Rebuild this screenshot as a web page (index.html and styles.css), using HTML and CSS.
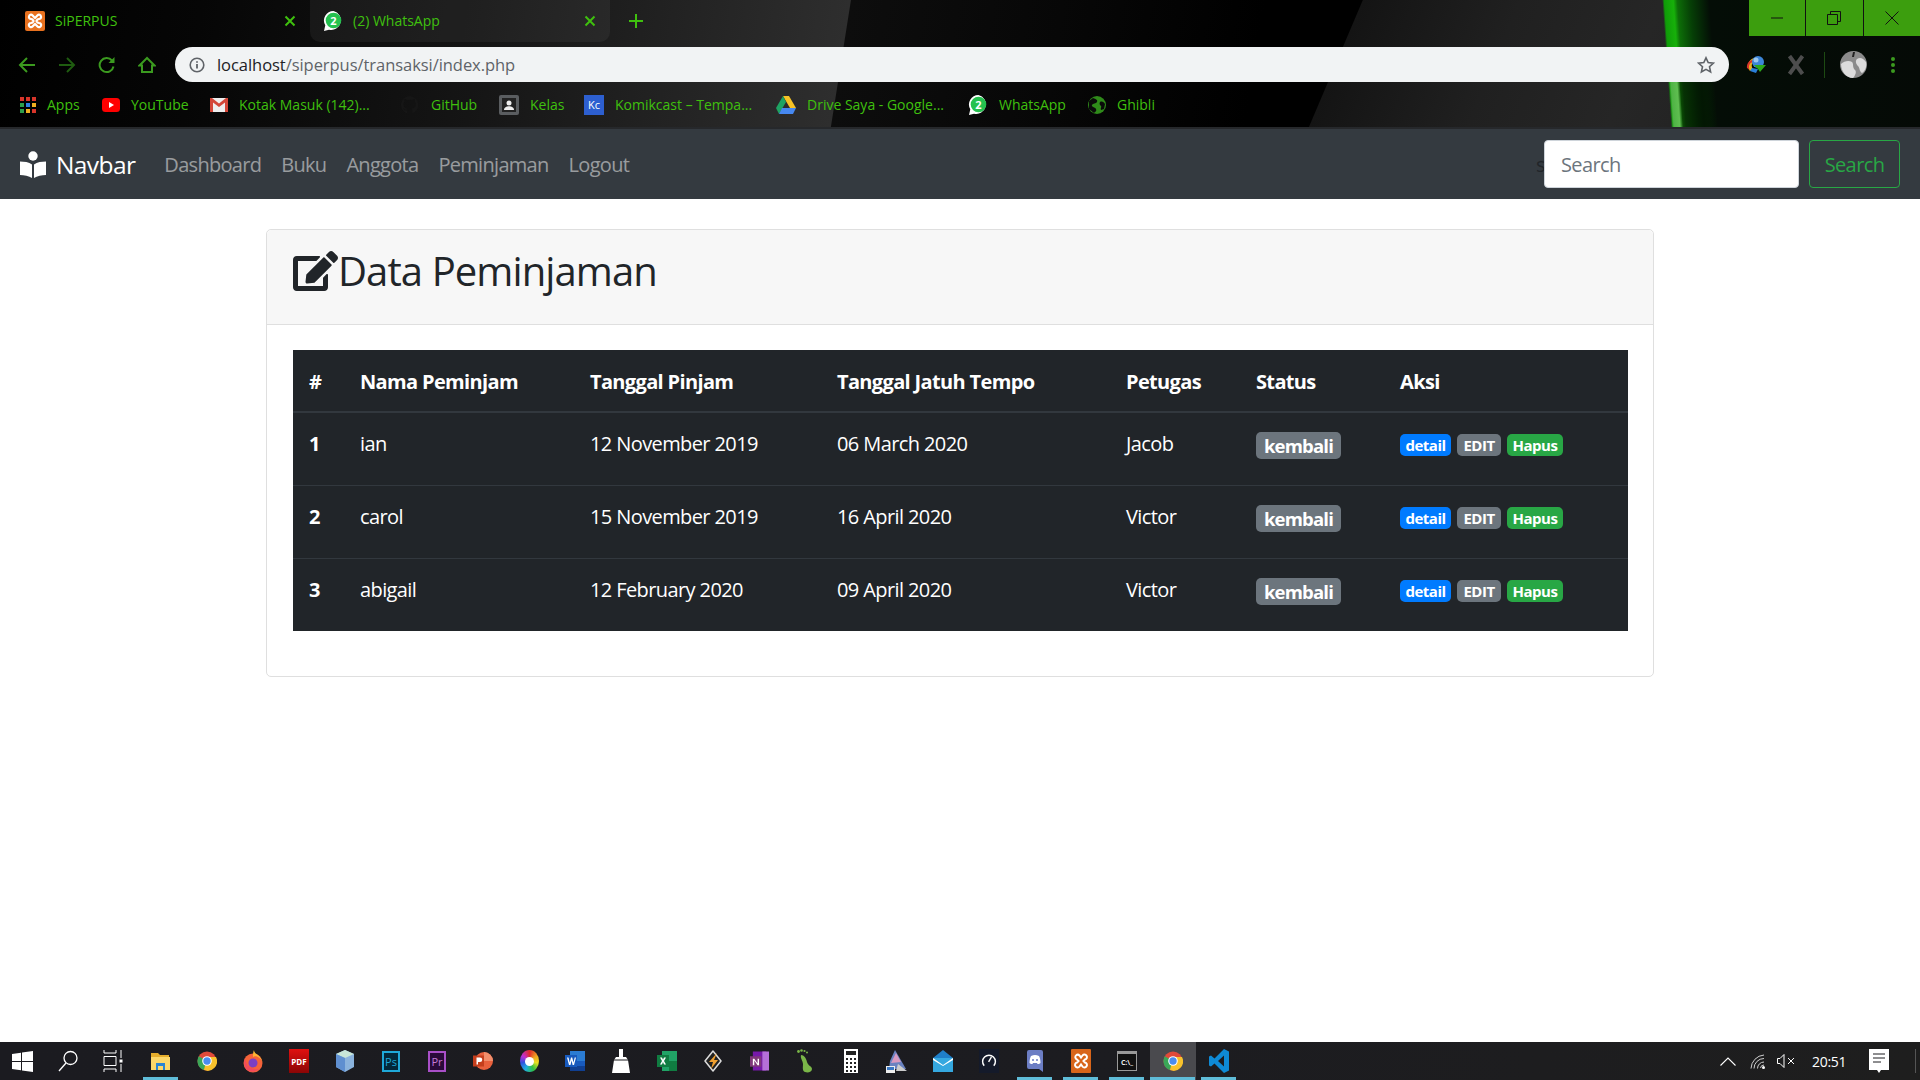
FILE: index.html
```html
<!DOCTYPE html>
<html lang="id">
<head>
<meta charset="utf-8">
<title>SiPERPUS</title>
<link rel="stylesheet" href="styles.css">
</head>
<body>
<svg class="sprite" width="0" height="0" aria-hidden="true">
  <defs>
    <symbol id="xampp" viewBox="0 0 20 20"><rect width="20" height="20" rx="2" fill="#e8711f"/><path d="M4 5.5a2 2 0 0 1 3.4-1.2L10 7l2.600-2.700A2 2 0 0 1 16 5.500 2 2 0 0 1 14 8l-1.500.4L11.500 10l1 1.600 1.500.4a2.100 2.100 0 1 1-1.500 3.500L10 13l-2.500 2.500A2.100 2.100 0 1 1 6 12l1.500-.4 1-1.600-1-1.600L6 8a2 2 0 0 1-2-2.500z" fill="none" stroke="#fff" stroke-width="2.200"/></symbol>
    <symbol id="wa" viewBox="0 0 20 20"><path d="M10.500 0a9.500 9.500 0 0 0-8.200 14.300L1 20l5-1.300A9.500 9.500 0 1 0 10.500 0z" fill="#fff"/><circle cx="10.500" cy="9.500" r="7.800" fill="#25c14f"/></symbol>
    <symbol id="chrome" viewBox="0 0 20 20"><circle cx="10" cy="10" r="9.500" fill="#e04a3a"/><path d="M10 10 1.800 5.200A9.500 9.500 0 0 0 7 19.100z" fill="#3aa757"/><path d="M10 6h9a9.500 9.500 0 0 1-12 13.100z" fill="#f8c22c"/><circle cx="10" cy="10" r="4.800" fill="#fff"/><circle cx="10" cy="10" r="3.700" fill="#4a8cf0"/></symbol>
  </defs>
</svg>
<div class="page">
  <header class="browser">
    <div class="tabstrip">
      <div class="tab tab-active">
        <svg class="fav" width="20" height="20"><use href="#xampp"/></svg>
        <span class="tab-title">SiPERPUS</span>
        <svg class="tab-x" width="12" height="12" viewBox="0 0 12 12"><path d="M1.500 1.500l9 9m0-9l-9 9" stroke="#3fc00e" stroke-width="2"/></svg>
      </div>
      <div class="tab tab-other">
        <svg class="fav" width="20" height="20"><use href="#wa"/><text x="10.500" y="13.500" class="wa-num">2</text></svg>
        <span class="tab-title">(2) WhatsApp</span>
        <svg class="tab-x" width="12" height="12" viewBox="0 0 12 12"><path d="M1.500 1.500l9 9m0-9l-9 9" stroke="#3fc00e" stroke-width="2"/></svg>
      </div>
      <svg class="tab-plus" width="16" height="16" viewBox="0 0 16 16"><path d="M8 1v14M1 8h14" stroke="#3fc00e" stroke-width="2"/></svg>
      <div class="winctl">
        <div class="winbtn"><svg width="14" height="14" viewBox="0 0 14 14"><path d="M1 7h12" stroke="#111" stroke-width="1"/></svg></div>
        <div class="winbtn"><svg width="14" height="14" viewBox="0 0 14 14"><path d="M.5 3.500h10v10H.5zM3.500 3.500v-3h10v10h-3" fill="none" stroke="#111" stroke-width="1"/></svg></div>
        <div class="winbtn"><svg width="14" height="14" viewBox="0 0 14 14"><path d="M.5.500l13 13m0-13l-13 13" stroke="#111" stroke-width="1"/></svg></div>
      </div>
    </div>
    <div class="toolbar">
      <svg class="nav-i" width="18" height="18" viewBox="0 0 18 18"><path d="M17 9H2m7-7L2 9l7 7" fill="none" stroke="#3b9a1f" stroke-width="2"/></svg>
      <svg class="nav-i" width="18" height="18" viewBox="0 0 18 18"><path d="M1 9h15M9 2l7 7-7 7" fill="none" stroke="#1f5c10" stroke-width="2"/></svg>
      <svg class="nav-i" width="18" height="18" viewBox="0 0 18 18"><path d="M15.500 10.500A7 7 0 1 1 14 4.500" fill="none" stroke="#3b9a1f" stroke-width="2"/><path d="M16.500 1v6h-6z" fill="#3b9a1f"/></svg>
      <svg class="nav-i" width="18" height="18" viewBox="0 0 18 18"><path d="M9 2 1.500 9.500H4V16h10V9.500h2.500z" fill="none" stroke="#3b9a1f" stroke-width="2"/></svg>
      <div class="omnibox">
        <svg width="16" height="16" viewBox="0 0 16 16"><circle cx="8" cy="8" r="6.800" fill="none" stroke="#5f6368" stroke-width="1.600"/><path d="M8 7v4.500M8 4.200v1.600" stroke="#5f6368" stroke-width="1.800"/></svg>
        <span class="url"><span class="url-host">localhost</span>/siperpus/transaksi/index.php</span>
        <svg class="star" width="18" height="18" viewBox="0 0 18 18"><path d="M9 1.800l2.200 4.800 5.200.6-3.900 3.500 1.100 5.200L9 13.300l-4.600 2.600 1.100-5.200L1.600 7.200l5.200-.6z" fill="none" stroke="#5f6368" stroke-width="1.600"/></svg>
      </div>
      <div class="ext">
        <svg class="ext-idm" width="22" height="20" viewBox="0 0 22 20"><path d="M5 16a8 8 0 0 1 4-13l1 3a5 5 0 0 0-2 8z" fill="#e8b020"/><path d="M2 13a7 7 0 0 1 5-8l1 2a5 5 0 0 0-3 8z" fill="#d8352a"/><path d="M5 16l6 2 2-4-6-1z" fill="#2a7fd8"/><circle cx="13" cy="7" r="6" fill="#3d86d8"/><circle cx="11" cy="5" r="2.500" fill="#9cc8f0"/><path d="M9 10l12 0-6 7-2-3z" fill="#2ea81a"/></svg>
        <svg class="ext-x" width="18" height="20" viewBox="0 0 18 20"><path d="M2.500 1 15.500 19M15.500 1 2.500 19" stroke="#4d4d4d" stroke-width="4"/></svg>
        <span class="ext-sep"></span>
        <svg class="avatar" width="27" height="27" viewBox="0 0 27 27"><circle cx="13.500" cy="13.500" r="13.500" fill="#8b8b8b"/><path d="M1 13c3-3 8-4 11-2 2 2 0 5 3 8 2 2 0 6-2 8C6 27 1 20 1 13zM17 8c3-2 6-1 9 3 1 5-1 9-4 11-3-2-2-5-4-7s-3-5-1-7z" fill="#dcdcdc"/><path d="M13 1l2 0-1 5-2 0z" fill="#222"/></svg>
        <svg class="ext-dots" width="6" height="18" viewBox="0 0 6 18"><circle cx="3" cy="3" r="2" fill="#3b9a1f"/><circle cx="3" cy="9" r="2" fill="#3b9a1f"/><circle cx="3" cy="15" r="2" fill="#3b9a1f"/></svg>
      </div>
    </div>
    <div class="bookmarks">
      <div class="bm bm-apps"><span class="apps-grid"><i class="c-r"></i><i class="c-r"></i><i class="c-r"></i><i class="c-g"></i><i class="c-b"></i><i class="c-y"></i><i class="c-g"></i><i class="c-y"></i><i class="c-r"></i></span><span>Apps</span></div>
      <div class="bm bm-yt"><svg width="18" height="14" viewBox="0 0 18 14"><rect width="18" height="14" rx="3.500" fill="#f00"/><path d="M7 4l5 3-5 3z" fill="#fff"/></svg><span>YouTube</span></div>
      <div class="bm bm-mail"><svg width="18" height="14" viewBox="0 0 18 14"><rect width="18" height="14" fill="#eee"/><path d="M0 0v14h3V4.500L9 9l6-4.500V14h3V0h-2L9 5.500 2 0z" fill="#d44638"/></svg><span>Kotak Masuk (142)...</span></div>
      <div class="bm bm-gh"><svg width="20" height="20" viewBox="0 0 20 20"><path d="M10 1a9 9 0 0 0-3 17.500v-3c-2.500.5-3-1-3-1-.5-1-1-1.500-1-1.500 1 0 1.500 1 1.500 1 1 1.500 2 1 2.500.8 0-.8.500-1.300.5-1.300-2-.2-4-1-4-4.500 0-1 .3-1.800 1-2.500-.1-.3-.4-1.200.1-2.500 0 0 .8-.2 2.500 1a9 9 0 0 1 5 0c1.700-1.200 2.500-1 2.500-1 .5 1.300.2 2.200.1 2.500.7.700 1 1.500 1 2.500 0 3.500-2 4.300-4 4.500.3.300.5.800.5 1.500v3.500A9 9 0 0 0 10 1z" fill="#161616"/></svg><span>GitHub</span></div>
      <div class="bm bm-kelas"><svg width="20" height="20" viewBox="0 0 20 20"><rect width="20" height="20" rx="2" fill="#5a5d60"/><rect x="3" y="3" width="14" height="14" fill="#222"/><circle cx="10" cy="8" r="2.500" fill="#eee"/><path d="M5 15c0-5 10-5 10 0z" fill="#eee"/></svg><span>Kelas</span></div>
      <div class="bm bm-kc"><span class="kc-icon">Kc</span><span>Komikcast – Tempa...</span></div>
      <div class="bm bm-drive"><svg width="20" height="18" viewBox="0 0 20 18"><path d="M7 0h6l7 12h-6z" fill="#f7c325"/><path d="M7 0 0 12l3 6 7-12z" fill="#1ea362"/><path d="M6 12h14l-3 6H3z" fill="#4688f1"/></svg><span>Drive Saya - Google...</span></div>
      <div class="bm bm-wa"><svg width="20" height="20"><use href="#wa"/><text x="10.500" y="13.500" class="wa-num">2</text></svg><span>WhatsApp</span></div>
      <div class="bm bm-gh2"><svg width="18" height="18" viewBox="0 0 18 18"><circle cx="9" cy="9" r="9" fill="#2f8a1a"/><path d="M5 2c3 1 5 2 4 4S5 7 4 9s3 2 4 4-1 3-2 4L1 13V5zM12 6c2-1 4 0 5 2l-1 5-3 1c-1-2 1-3 0-4s-2-2-1-4z" fill="#0a0a0a"/></svg><span>Ghibli</span></div>
    </div>
  </header>

  <nav class="navbar">
    <div class="brand">
      <svg width="26" height="27" viewBox="0 0 26 27"><circle cx="13" cy="5" r="4.700" fill="#fff"/><path d="M0 10.500c4 0 9 .6 12 3V27c-3-2-8-3-12-3zM26 10.500c-4 0-9 .6-12 3V27c3-2 8-3 12-3z" fill="#fff"/></svg>
      <span>Navbar</span>
    </div>
    <ul class="navlinks">
      <li>Dashboard</li><li>Buku</li><li>Anggota</li><li>Peminjaman</li><li>Logout</li>
    </ul>
    <form class="searchform">
      <span class="ghost-s">s</span>
      <input class="searchbox" type="text" placeholder="Search" aria-label="Search">
      <button class="searchbtn" type="button">Search</button>
    </form>
  </nav>

  <main class="content">
    <section class="card">
      <div class="card-header">
        <svg class="h-icon" width="45" height="40" viewBox="0 0 576 512"><path fill="#212529" d="M402.600 83.200l90.200 90.200c3.800 3.800 3.800 10 0 13.800L274.400 405.600l-92.800 10.300c-12.400 1.400-22.900-9.100-21.500-21.500l10.300-92.800L388.800 83.200c3.800-3.800 10-3.800 13.800 0zm162-22.900l-48.800-48.800c-15.200-15.200-39.900-15.200-55.200 0l-35.400 35.400c-3.800 3.800-3.800 10 0 13.800l90.200 90.200c3.800 3.800 10 3.800 13.800 0l35.400-35.400c15.200-15.300 15.200-40 0-55.200zM384 346.200V448H64V128h229.800c3.200 0 6.200-1.300 8.500-3.500l40-40c7.600-7.600 2.200-20.500-8.500-20.500H48C21.500 64 0 85.500 0 112v352c0 26.500 21.500 48 48 48h352c26.500 0 48-21.500 48-48V306.200c0-10.700-12.900-16-20.500-8.500l-40 40c-2.200 2.300-3.500 5.300-3.500 8.500z"/></svg>
        <h1>Data Peminjaman</h1>
      </div>
      <div class="card-body">
        <table class="tbl">
          <colgroup>
            <col class="c1"><col class="c2"><col class="c3"><col class="c4"><col class="c5"><col class="c6"><col class="c7">
          </colgroup>
          <thead>
            <tr><th>#</th><th>Nama Peminjam</th><th>Tanggal Pinjam</th><th>Tanggal Jatuh Tempo</th><th>Petugas</th><th>Status</th><th>Aksi</th></tr>
          </thead>
          <tbody>
            <tr><th>1</th><td>ian</td><td>12 November 2019</td><td>06 March 2020</td><td>Jacob</td><td><span class="status">kembali</span></td><td><div class="acts"><span class="act a-blue">detail</span><span class="act a-grey">EDIT</span><span class="act a-green">Hapus</span></div></td></tr>
            <tr><th>2</th><td>carol</td><td>15 November 2019</td><td>16 April 2020</td><td>Victor</td><td><span class="status">kembali</span></td><td><div class="acts"><span class="act a-blue">detail</span><span class="act a-grey">EDIT</span><span class="act a-green">Hapus</span></div></td></tr>
            <tr><th>3</th><td>abigail</td><td>12 February 2020</td><td>09 April 2020</td><td>Victor</td><td><span class="status">kembali</span></td><td><div class="acts"><span class="act a-blue">detail</span><span class="act a-grey">EDIT</span><span class="act a-green">Hapus</span></div></td></tr>
          </tbody>
        </table>
      </div>
    </section>
  </main>

  <footer class="taskbar">
    <div class="tb-start">
      <div class="tb-s"><svg width="21" height="21" viewBox="0 0 21 21"><path d="M0 3l9-1.300V10H0zM10 1.500 21 0v10H10zM0 11h9v8.300L0 18zM10 11h11v10l-11-1.500z" fill="#fff"/></svg></div>
      <div class="tb-s"><svg width="20" height="22" viewBox="0 0 20 22"><circle cx="12.500" cy="8" r="6.500" fill="none" stroke="#fff" stroke-width="1.300"/><path d="M8 13 1 21" stroke="#fff" stroke-width="1.300"/></svg></div>
      <div class="tb-s"><svg width="20" height="22" viewBox="0 0 20 22"><path d="M1 0v3h12V0M1 6.500h12v9H1zM1 22v-3h12v3M18 0v8m0 6v8" fill="none" stroke="#fff" stroke-width="1"/><rect x="16.500" y="9.500" width="3" height="3" fill="#fff"/></svg></div>
    </div>
    <div class="tb-i on"><svg width="20" height="20" viewBox="0 0 20 20"><path d="M0 2h7l2 2h9v4H0z" fill="#e5ad2c"/><path d="M0 6h19v13H0z" fill="#fcd769"/><path d="M5 19v-7h9v7h-2v-4H7v4z" fill="#2a84d2"/></svg></div>
    <div class="tb-i"><svg width="20" height="20"><use href="#chrome"/></svg></div>
    <div class="tb-i"><svg width="20" height="23" viewBox="0 0 20 23"><circle cx="10" cy="13" r="9.500" fill="#f5633a"/><path d="M11 0c0 3 3 4 5 6 3 3 4 7 4 7-1-3-3-5-5-6-1-1-4-1-5 0 0-3 0-5 1-7z" fill="#fcb531"/><circle cx="10" cy="13" r="4.500" fill="#7b3fc4"/><path d="M2 8c1 8 6 12 14 11-3 3-9 4-13 0C1 17 1 11 2 8z" fill="#f24a5c"/></svg></div>
    <div class="tb-i"><span class="pdf">PDF</span></div>
    <div class="tb-i"><svg width="18" height="22" viewBox="0 0 18 22"><path d="M9 0l9 4v13l-9 5-9-5V4z" fill="#8bb3dd"/><path d="M9 0l9 4-9 4-9-4z" fill="#c8e6d8"/><path d="M9 8v14L0 17V4z" fill="#5f8fd0"/></svg></div>
    <div class="tb-i"><span class="sq sq-ps">Ps</span></div>
    <div class="tb-i"><span class="sq sq-pr">Pr</span></div>
    <div class="tb-i"><svg width="20" height="20" viewBox="0 0 20 20"><circle cx="11" cy="10" r="9" fill="#e8603c"/><path d="M11 1a9 9 0 0 1 9 9h-9z" fill="#f18e6b"/><rect y="4.500" width="11" height="11" fill="#c43e1c"/><path d="M3.500 6.500h3.500a2 2 0 0 1 0 4.500H5v2.500H3.500z" fill="#fff"/></svg></div>
    <div class="tb-i"><span class="wheel"><i></i></span></div>
    <div class="tb-i"><svg width="20" height="20" viewBox="0 0 20 20"><rect x="5" width="15" height="20" fill="#2b7cd3"/><rect x="5" y="10" width="15" height="5" fill="#185abd"/><rect x="5" y="15" width="15" height="5" fill="#103f91"/><rect y="4" width="12" height="12" fill="#185abd"/><path d="M2 6.500h1.500l1.200 5 1.300-5h1.200l1.300 5 1.200-5H11L9 14H7.600L6.600 9.500 5.500 14H4z" fill="#fff"/></svg></div>
    <div class="tb-i"><svg width="18" height="24" viewBox="0 0 18 24"><path d="M7 0h4v8h3l2 3 2 13H0l2-13 2-3h3z" fill="#fff"/><path d="M0 11h18" stroke="#1c1c20" stroke-width="1"/></svg></div>
    <div class="tb-i"><svg width="20" height="20" viewBox="0 0 20 20"><rect x="5" width="15" height="20" fill="#21a366"/><rect x="12" y="10" width="8" height="10" fill="#107c41"/><rect y="4" width="12" height="12" fill="#107c41"/><path d="M3 6.500h2l1 2.300 1-2.300h2L7 10l2 3.500H7L6 11l-1 2.500H3L5 10z" fill="#fff"/></svg></div>
    <div class="tb-i"><svg width="18" height="22" viewBox="0 0 18 22"><path d="M9 1l8 10-8 10-8-10z" fill="#222" stroke="#ddd" stroke-width="1.500" stroke-linejoin="round"/><path d="M13 3 5 12h4l-2 7 7-9h-4z" fill="#f0a030"/></svg></div>
    <div class="tb-i"><svg width="19" height="20" viewBox="0 0 20 20"><rect x="3" width="14" height="20" fill="#7719aa"/><rect x="13" width="7" height="20" fill="#b56fd8"/><rect y="5" width="12" height="11" fill="#80397b"/><path d="M3 7.500h1.500L8 12.500v-5h1.500v7H8L4.500 9.500v5H3z" fill="#fff"/></svg></div>
    <div class="tb-i"><svg width="16" height="24" viewBox="0 0 16 24"><path d="M4 6c3 0 5 3 6 7s5 4 5 7-4 4-7 3-2-5-2-8-3-6-2-9z" fill="#7ab648"/><circle cx="1.500" cy="2.500" r="1.400" fill="#7ab648"/><circle cx="4.500" cy="1.500" r="1.300" fill="#7ab648"/><circle cx="7.500" cy="2" r="1.100" fill="#7ab648"/><circle cx="10" cy="3.500" r="1" fill="#7ab648"/></svg></div>
    <div class="tb-i"><span class="calc"><b></b><span class="keys"><i></i><i></i><i></i><i></i><i></i><i></i><i></i><i></i><i></i><i></i><i></i><i></i></span></span></div>
    <div class="tb-i"><svg width="22" height="24" viewBox="0 0 22 24"><path d="M4 12 9 1l11 19H3z" fill="#6a82c0"/><path d="M5 14 10 4l5 9z" fill="#d89ac0"/><rect y="17" width="9" height="7" fill="#eee"/><rect x="1" y="18" width="7" height="3" fill="#3b78c4"/><path d="M12 15l9 7H10z" fill="#ccc"/></svg></div>
    <div class="tb-i"><svg width="20" height="22" viewBox="0 0 20 22"><path d="M0 8l10-8 10 8z" fill="#1f7fc9"/><path d="M0 8h20v14H0z" fill="#35a8e0"/><path d="M0 8l10 7 10-7v2l-10 6L0 10z" fill="#fff"/></svg></div>
    <div class="tb-i"><span class="speed"><svg width="20" height="22" viewBox="0 0 20 22"><path d="M4 17a8 8 0 1 1 12 0" fill="none" stroke="#fff" stroke-width="1.800"/><path d="M9.500 12 13 6" stroke="#fff" stroke-width="1.800"/></svg></span></div>
    <div class="tb-i on"><svg width="16" height="22" viewBox="0 0 16 22"><path d="M2 0h12a2 2 0 0 1 2 2v20l-4-3H2a2 2 0 0 1-2-2V2a2 2 0 0 1 2-2z" fill="#6c7ec4"/><path d="M4 6c3-1.500 5-1.500 8 0 1 2 1.500 4 1.500 7-1 1-2 1-3 1l-.5-1H6l-.5 1c-1 0-2 0-3-1C2.500 10 3 8 4 6z" fill="#fff"/><circle cx="6" cy="10" r="1" fill="#6c7ec4"/><circle cx="10" cy="10" r="1" fill="#6c7ec4"/></svg></div>
    <div class="tb-i on"><svg width="20" height="24" viewBox="0 0 20 24"><rect width="20" height="24" rx="1" fill="#d8651a"/><path d="M5.500 6a2.500 2.500 0 0 1 3 .5L10 8.500l1.500-2a2.500 2.500 0 1 1 2.500 4L12.500 12l1.500 1.500a2.500 2.500 0 1 1-2.500 4l-1.500-2-1.500 2a2.500 2.500 0 1 1-2.500-4L7.500 12 6 10.500A2.500 2.500 0 0 1 5.500 6z" fill="none" stroke="#fff" stroke-width="2"/></svg></div>
    <div class="tb-i on"><span class="cmd"><span>C:\_</span></span></div>
    <div class="tb-i on active"><svg width="20" height="20"><use href="#chrome"/></svg></div>
    <div class="tb-i on"><svg width="20" height="24" viewBox="0 0 20 24"><path d="M15 0l5 2.500v19L15 24 5.500 14.500 2 17.500 0 16.500v-9L2 6.500l3.500 3zM15 6.500 9 12l6 5.500z" fill="#0e8ad6"/></svg></div>
    <div class="tray">
      <svg class="tr-up" width="16" height="9" viewBox="0 0 16 9"><path d="M.5 8.500 8 1l7.500 7.500" fill="none" stroke="#fff" stroke-width="1.100"/></svg>
      <svg class="tr-wifi" width="15" height="15" viewBox="0 0 15 15"><path d="M1 14.500A14 14 0 0 1 14 1M4 14.500A10 10 0 0 1 14 4.500M7.500 14.500A6.500 6.500 0 0 1 14 8M10.500 14A3.500 3.500 0 0 1 14 11" fill="none" stroke="#cfcfcf" stroke-width="1"/><circle cx="13.500" cy="13.500" r="1.500" fill="#fff"/></svg>
      <svg class="tr-vol" width="19" height="14" viewBox="0 0 19 14"><path d="M.5 4.500h2.500L7 .5v13l-4-4H.5zM11 4l6 6m0-6-6 6" fill="none" stroke="#fff" stroke-width="1"/></svg>
      <span class="clock">20:51</span>
      <svg class="tr-note" width="20" height="24" viewBox="0 0 20 24"><path d="M0 0h20v21h-8l-2 3-2-3H0z" fill="#fff"/><path d="M4 5h12M4 9h12M4 13h8" stroke="#1c1c20" stroke-width="1"/></svg>
      <span class="tr-edge"></span>
    </div>
  </footer>
</div>
</body>
</html>
```
FILE: styles.css
```css
* { box-sizing: border-box; }
html, body { margin: 0; height: 100%; }
body { font-family: "Open Sans", "Noto Sans", "DejaVu Sans", sans-serif; background: #fff; color: #212529; overflow: hidden; }
.sprite { position: absolute; }
.wa-num { font: bold 11px "Open Sans", sans-serif; fill: #fff; text-anchor: middle; }

.page { display: flex; flex-direction: column; height: 1080px; width: 1920px; }

/* browser chrome */
.browser {
  height: 129px; flex: none; border-bottom: 2px solid #26282b;
  color: #3fc00e; font-size: 14px;
  background:
    linear-gradient(86deg, transparent 1667px, #0f9c08 1669px, #17b00a 1678px, #0d6e08 1682px, #063f06 1695px, #040d06 1714px, #050a06 100%),
    linear-gradient(113deg, transparent 1254px, #141414 1255px, #202020 1400px, #262626 1530px, #1c1c1c 100%),
    linear-gradient(99deg, #000 0, #060606 200px, #151515 480px, #2e2e2e 840px, #0d0d0d 841px, #070707 1050px, #000 1250px, #000 100%);
}
.tabstrip { height: 47px; display: flex; align-items: flex-start; }
.tab { height: 42px; display: flex; align-items: center; }
.tab-active { width: 310px; padding: 0 0 0 25px; }
.tab-other { width: 300px; padding: 0 0 0 13px; background: rgba(255,255,255,.05); border-radius: 0 0 10px 10px; }
.tab-title { margin-left: 10px; flex: 1; margin-top: -2px; }
.tab-x { margin-right: 14px; }
.tab-plus { margin: 13px 0 0 18px; }
.winctl { margin-left: auto; display: flex; height: 36px; width: 171px; background: #3c9e0e; }
.winbtn { flex: 1; display: flex; align-items: center; justify-content: center; }
.winbtn + .winbtn { border-left: 1px solid #111; }

.toolbar { height: 35px; display: flex; align-items: center; }
.nav-i { margin-left: 22px; flex: none; }
.nav-i:first-child { margin-left: 18px; }
.omnibox { width: 1554px; height: 35px; flex: none; margin-left: 19px; background: #f1f3f4; border-radius: 18px; display: flex; align-items: center; padding: 0 14px; color: #5f6368; font-size: 16.500px; letter-spacing: -.05px; }
.url { margin-left: 12px; flex: 1; }
.url-host { color: #202124; }
.ext { display: flex; align-items: center; flex: 1; }
.ext-idm { margin-left: 16px; }
.ext-x { margin-left: 20px; }
.ext-sep { width: 1px; height: 26px; background: #1d4a12; margin-left: 19px; }
.avatar { margin-left: 15px; flex: none; }
.ext-dots { margin-left: 23px; }

.bookmarks { height: 45px; display: flex; align-items: center; background: linear-gradient(86deg, transparent 1668px, #4fb345 1670px, #5fbe50 1676px, rgba(0,0,0,.55) 1679px, rgba(0,0,0,.55) 1700px, transparent 1715px); }
.bm { display: flex; align-items: center; gap: 11px; flex: none; white-space: nowrap; }
.bm-apps { margin-left: 20px; width: 82px; }
.bm-yt { width: 108px; }
.bm-mail { width: 190px; }
.bm-gh { width: 99px; }
.bm-kelas { width: 85px; }
.bm-kc { width: 192px; }
.bm-drive { width: 192px; }
.bm-wa { width: 120px; }
.apps-grid { display: grid; grid-template-columns: repeat(3, 4px); grid-auto-rows: 4px; gap: 2px; }
.apps-grid i { display: block; }
.c-r { background: #d8352a; } .c-g { background: #2e9e4a; } .c-b { background: #2f7fe0; } .c-y { background: #f0b020; }
.kc-icon { width: 20px; height: 20px; background: #2d5fd0; color: #fff; font-size: 11px; display: flex; align-items: center; justify-content: center; }

/* navbar */
.navbar { height: 70px; flex: none; background: #343a40; display: flex; align-items: center; padding: 0 20px; }
.brand { display: flex; align-items: center; gap: 10px; color: #fff; font-size: 24.500px; letter-spacing: -.6px; }
.navlinks { list-style: none; margin: 0 0 0 29px; padding: 0; display: flex; gap: 20px; font-size: 20px; letter-spacing: -.7px; color: rgba(255,255,255,.5); }
.searchform { margin-left: auto; display: flex; align-items: center; gap: 10px; position: relative; }
.ghost-s { position: absolute; left: -8px; color: #212529; font-size: 20px; }
.searchbox { width: 255px; height: 48px; border: 1px solid #ced4da; border-radius: 4px; background: #fff; padding: 0 16px; font: 20px "Open Sans", sans-serif; letter-spacing: -.6px; color: #495057; position: relative; }
.searchbox::placeholder { color: #6c757d; opacity: 1; }
.searchbtn { width: 91px; height: 48px; border: 1px solid #28a745; border-radius: 4px; background: transparent; color: #28a745; font: 20px "Open Sans", sans-serif; letter-spacing: -.6px; padding: 0; }

/* content */
.content { flex: 1; padding: 30px 266px 0 266px; }
.card { border: 1px solid #dfdfdf; border-radius: 5px; height: 448px; }
.card-header { height: 95px; background: #f7f7f7; border-bottom: 1px solid #dfdfdf; border-radius: 5px 5px 0 0; padding: 0 26px 12px; display: flex; align-items: center; }
.h-icon { flex: none; }
h1 { margin: 0; font-size: 40px; font-weight: 500; letter-spacing: -.9px; color: #212529; line-height: 1.2; }
.card-body { padding: 25px 26px 0; }

.tbl { width: 1335px; border-collapse: collapse; table-layout: fixed; background: #212529; color: #fff; font-size: 20px; letter-spacing: -.6px; }
.c1 { width: 51px; } .c2 { width: 230px; } .c3 { width: 247px; } .c4 { width: 289px; } .c5 { width: 130px; } .c6 { width: 144px; } .c7 { width: 244px; }
.tbl th, .tbl td { padding: 16px 16px 0; text-align: left; vertical-align: top; font-weight: 400; line-height: 30px; }
.tbl th { font-weight: 700; }
.tbl thead th { padding-top: 2px; vertical-align: middle; letter-spacing: -.65px; }
.tbl thead tr { height: 62px; border-bottom: 2px solid #32383e; }
.tbl tbody tr { height: 73px; border-bottom: 1px solid #32383e; }
.tbl tbody tr:last-child { border-bottom: 0; }
.status { display: block; width: 85px; height: 27px; margin-top: 3px; line-height: 27px; border-radius: 5px; background: #6c757d; text-align: center; font-weight: 700; font-size: 18.500px; letter-spacing: -.8px; }
.acts { display: flex; gap: 6px; margin-top: 5px; }
.act { height: 22px; line-height: 22px; border-radius: 5px; color: #fff; font-weight: 700; font-size: 15px; letter-spacing: -.5px; text-align: center; }
.a-blue { width: 51px; background: #007bff; }
.a-grey { width: 44px; background: #6c757d; }
.a-green { width: 56px; background: #28a745; }

/* taskbar */
.taskbar { height: 38px; flex: none; display: flex; align-items: center; background: linear-gradient(90deg, #1b1b20 0, #1c1c20 60%, #1e1e1e 100%); }
.tb-start { width: 138px; display: flex; flex: none; align-self: stretch; }
.tb-s { width: 45px; display: flex; align-items: center; justify-content: center; }
.tb-i { width: 46px; align-self: stretch; flex: none; display: flex; align-items: center; justify-content: center; position: relative; }
.tb-i.on::after { content: ""; position: absolute; left: 5px; right: 6px; bottom: 0; height: 3px; background: #5fbcd8; }
.tb-i.active { background: #4a4a4e; }
.tb-i.active::after { left: 0; right: 1px; }
.pdf { width: 20px; height: 24px; background: linear-gradient(#e01010, #8a0505); color: #fff; font-size: 8px; font-weight: 700; display: flex; align-items: center; justify-content: center; }
.sq { width: 18px; height: 21px; font-size: 11px; display: flex; align-items: center; justify-content: center; background: #1b1b30; }
.sq-ps { border: 2px solid #1fa8d8; color: #1fa8d8; background: #03283a; }
.sq-pr { border: 2px solid #a94fc8; color: #c47ad8; background: #2a0a3a; }
.wheel { width: 19px; height: 22px; border-radius: 50%; background: conic-gradient(#e02a2a, #f0a020, #e8e020, #30c040, #20b0e0, #3050e0, #c030d0, #e02a2a); display: flex; align-items: center; justify-content: center; }
.wheel i { width: 9px; height: 9px; border-radius: 50%; background: #fff; }
.calc { width: 14px; height: 24px; background: #fff; display: block; padding: 2px; }
.calc b { display: block; height: 4px; background: #222; }
.keys { display: grid; grid-template-columns: repeat(3, 2px); grid-auto-rows: 2px; gap: 2px; margin-top: 3px; justify-content: space-between; }
.keys i { display: block; background: #222; }
.speed { width: 20px; height: 24px; background: #141a2a; display: flex; align-items: center; justify-content: center; }
.speed svg { width: 16px; }
.cmd { width: 20px; height: 20px; background: #111; border: 1px solid #999; border-top-width: 3px; color: #eee; font-size: 7px; font-weight: 700; display: flex; align-items: center; justify-content: center; }
.tray { flex: 1; position: relative; display: flex; align-items: center; color: #fff; }
.tr-up { margin-left: 478px; }
.tr-wifi { margin-left: 14px; }
.tr-vol { margin-left: 12px; }
.clock { margin-left: 16px; font-size: 14px; letter-spacing: -.3px; width: 36px; }
.tr-note { margin-left: 21px; }
.tr-edge { position: absolute; right: 4px; top: 0; bottom: 0; width: 1px; background: #555; }
```
